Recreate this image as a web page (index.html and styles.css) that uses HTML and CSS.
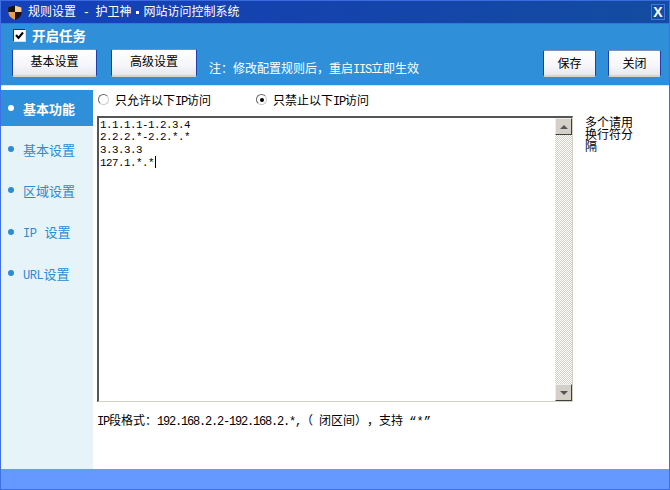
FILE: index.html
```html
<!DOCTYPE html>
<html lang="zh-CN">
<head>
<meta charset="utf-8">
<title>规则设置</title>
<link rel="stylesheet" href="styles.css">
</head>
<body>
<div class="window">
  <header class="titlebar">
    <svg class="shield" viewBox="0 0 14 15" width="14" height="15">
      <path d="M7 0.5 L13.5 2.5 V7 C13.5 11 10.5 13.500 7 14.800 V7 H0.500 V2.500 Z" fill="#1a1408"/>
      <path d="M7 0.500 V7 H13.500 V2.500 Z" fill="#f6cf8a"/>
      <path d="M7 0.500 L0.500 2.500 V7 H7 Z" fill="#1a1408"/>
      <path d="M0.500 7 H7 V14.800 C3.500 13.500 0.500 11 0.500 7 Z" fill="#e9a04c"/>
      <path d="M7 7 H13.500 C13.500 11 10.500 13.500 7 14.800 Z" fill="#1a1408"/>
    </svg>
    <span class="title-text">规则设置 <span class="lat">-</span> 护卫神<span class="dot"></span>网站访问控制系统</span>
    <span class="close-x">X</span>
  </header>

  <section class="toolbar">
    <label class="task">
      <span class="checkbox"><svg viewBox="0 0 9 9" width="9" height="9"><path d="M1 4 L3.500 7 L8 1.500" fill="none" stroke="#000" stroke-width="2"/></svg></span>
      <span>开启任务</span>
    </label>
    <div class="actions">
      <button class="btn btn-wide">基本设置</button>
      <button class="btn btn-wide">高级设置</button>
      <span class="note">注：修改配置规则后，重启<span class="lat">IIS</span>立即生效</span>
      <span class="spacer"></span>
      <button class="btn btn-small">保存</button>
      <button class="btn btn-small">关闭</button>
    </div>
  </section>

  <div class="body">
    <nav class="sidebar">
      <a class="nav-item active"><i class="bullet"></i><span>基本功能</span></a>
      <a class="nav-item"><i class="bullet"></i><span>基本设置</span></a>
      <a class="nav-item"><i class="bullet"></i><span>区域设置</span></a>
      <a class="nav-item"><i class="bullet"></i><span><span class="lat lat-nav lat-gap">IP</span>设置</span></a>
      <a class="nav-item"><i class="bullet"></i><span><span class="lat lat-nav">URL</span>设置</span></a>
    </nav>

    <main class="content">
      <div class="radios">
        <label class="radio-label"><span class="radio"></span><span>只允许以下<span class="lat">IP</span>访问</span></label>
        <label class="radio-label"><span class="radio checked"></span><span>只禁止以下<span class="lat">IP</span>访问</span></label>
      </div>
      <div class="editor-row">
        <div class="editor">
          <div class="editor-text">
            <div>1.1.1.1-1.2.3.4</div>
            <div>2.2.2.*-2.2.*.*</div>
            <div>3.3.3.3</div>
            <div>127.1.*.*<span class="caret"></span></div>
          </div>
          <div class="scrollbar">
            <span class="sb-btn"><i class="arrow-up"></i></span>
            <span class="sb-track"></span>
            <span class="sb-btn"><i class="arrow-down"></i></span>
          </div>
        </div>
        <p class="hint">多个请用换行符分隔</p>
      </div>
      <p class="format"><span class="lat">IP</span>段格式：<span class="lat">192.168.2.2-192.168.2.*,</span>（<span class="lat"> </span>闭区间），支持<span class="lat"> </span><span class="lat lat-quote">“*”</span></p>
    </main>
  </div>

  <footer class="statusbar"></footer>
</div>
</body>
</html>
```

FILE: styles.css
```css
* { box-sizing: border-box; }
html, body { margin: 0; padding: 0; background: #fff; }
body {
  width: 670px;
  height: 490px;
  overflow: hidden;
  font-family: "Noto Sans CJK SC", "Liberation Sans", sans-serif;
  font-size: 12px;
  color: #000;
  text-spacing-trim: space-all;
}
.lat {
  font-family: "Liberation Mono", monospace;
  font-size: 12px;
  letter-spacing: -1.200px;
}
.lat-quote { letter-spacing: 0.100px; }
.window {
  width: 670px;
  height: 490px;
  display: flex;
  flex-direction: column;
  border: 1px solid #3f6fe6;
  border-top: 1px solid #3a6be0;
  background: #fff;
}
.titlebar {
  height: 23px;
  flex: none;
  display: flex;
  align-items: center;
  padding: 0 4px 0 7px;
  background: linear-gradient(90deg, #1541bb, #1443ad 45%, #134ca0);
  border-bottom: 1px solid #3a72e6;
  color: #fff;
  line-height: 14px;
}
.shield { margin-right: 6px; flex: none; }
.title-text { white-space: pre; flex: 1; }
.title-text .lat { margin: 0 4px; }
.dot {
  display: inline-block;
  width: 3px;
  height: 3px;
  margin: 0 4px 2px 5px;
  background: #fff;
}
.close-x {
  width: 14px;
  height: 16px;
  border: 1px solid #3f78e6;
  font: bold 14px/14px "Liberation Sans", sans-serif;
  text-align: center;
  color: #fff;
}
.toolbar {
  height: 62px;
  flex: none;
  background: #2f8fd8;
  padding: 2px 0 0 11px;
  border-bottom: 1px solid #cfe4f5;
  color: #fff;
}
.task {
  display: flex;
  align-items: center;
  height: 18px;
  font-size: 13.500px;
  font-weight: bold;
  line-height: 18px;
}
.checkbox {
  width: 13px;
  height: 13px;
  margin: 0 6px 0 1px;
  background: #fff;
  border: 1px solid #333;
  border-right-color: #ddd;
  border-bottom-color: #ddd;
  display: flex;
  align-items: center;
  justify-content: center;
}
.actions {
  display: flex;
  align-items: flex-end;
  margin-top: 4px;
  height: 29px;
  padding-right: 8px;
}
.btn {
  height: 28px;
  padding: 0;
  font: 12px/1 "Noto Sans CJK SC", sans-serif;
  color: #000;
  background: linear-gradient(#fff, #f6f6fb 60%, #e7e7f0);
  border: 1px solid #1f3fb0;
  border-top-color: #7f8fb4;
  border-bottom: 2px solid #d8d4c6;
  border-radius: 2px;
}
.btn-wide { width: 85px; margin-right: 14px; padding-bottom: 4px; }
.btn-wide + .btn-wide { width: 86px; margin-right: 12px; }
.btn-small { width: 53px; height: 27px; margin-left: 12px; }
.note { white-space: nowrap; line-height: 14px; }
.spacer { flex: 1; }
.body {
  flex: 1;
  display: flex;
  min-height: 0;
  padding-top: 4px;
}
.sidebar {
  width: 92px;
  flex: none;
  background: #e6f3f9;
}
.nav-item {
  display: flex;
  align-items: center;
  height: 41.300px;
  padding-left: 7px;
  font-size: 13px;
  color: #2b8bd4;
  white-space: pre;
}
.nav-item.active {
  height: 36px;
  margin-bottom: 2.500px;
  background: #2f8fd8;
  color: #fff;
  font-weight: bold;
}
.lat-nav { font-size: 12px; letter-spacing: -0.400px; }
.lat-gap { margin-right: 8px; }
.bullet {
  width: 6px;
  height: 6px;
  border-radius: 50%;
  margin-right: 9px;
  background: #2b8bd4;
  flex: none;
}
.active .bullet { background: #fff; }
.content {
  flex: 1;
  min-width: 0;
  padding: 0 0 0 4px;
  margin-top: -1px;
}
.radios {
  display: flex;
  height: 21px;
  align-items: center;
  padding-left: 1px;
}
.radio-label {
  display: flex;
  align-items: center;
  width: 158px;
  white-space: nowrap;
}
.radio {
  width: 11px;
  height: 11px;
  border-radius: 50%;
  border: 1px solid #666;
  border-right-color: #ccc;
  border-bottom-color: #ccc;
  background: #fff;
  margin-right: 6px;
  position: relative;
  flex: none;
}
.radio.checked::after {
  content: "";
  position: absolute;
  left: 2.500px;
  top: 2.500px;
  width: 4px;
  height: 4px;
  border-radius: 50%;
  background: #000;
}
.editor-row {
  display: flex;
  margin-top: 6px;
}
.editor {
  width: 476px;
  height: 286px;
  flex: none;
  display: flex;
  border: 2px solid #555;
  border-right: 1px solid #d4d0c8;
  border-bottom: 1px solid #d4d0c8;
  background: #fff;
}
.editor-text {
  flex: 1;
  padding: 1px 0 0 1px;
  font-family: "Liberation Mono", monospace;
  font-size: 10.800px;
  letter-spacing: -0.480px;
  line-height: 12.300px;
}
.caret {
  display: inline-block;
  width: 1px;
  height: 12px;
  background: #000;
  margin-left: 1px;
  vertical-align: -2px;
}
.scrollbar {
  width: 17px;
  flex: none;
  display: flex;
  flex-direction: column;
}
.sb-track {
  flex: 1;
  background-color: #fff;
  background-image:
    linear-gradient(45deg, #d4d0c8 25%, transparent 25%, transparent 75%, #d4d0c8 75%),
    linear-gradient(45deg, #d4d0c8 25%, transparent 25%, transparent 75%, #d4d0c8 75%);
  background-size: 2px 2px;
  background-position: 0 0, 1px 1px;
}
.sb-btn {
  height: 17px;
  flex: none;
  background: #d4d0c8;
  border: 1px solid;
  border-color: #eee #404040 #404040 #eee;
  display: flex;
  align-items: center;
  justify-content: center;
}
.arrow-up, .arrow-down {
  width: 0;
  height: 0;
  border-left: 4px solid transparent;
  border-right: 4px solid transparent;
}
.arrow-up { border-bottom: 4px solid #555; }
.arrow-down { border-top: 4px solid #555; }
.hint {
  width: 50px;
  margin: 0 0 0 12px;
  line-height: 12px;
}
.format {
  margin: 11px 0 0;
  line-height: 14px;
  white-space: nowrap;
}
.statusbar {
  height: 20px;
  flex: none;
  background: #6699ff;
}
```
